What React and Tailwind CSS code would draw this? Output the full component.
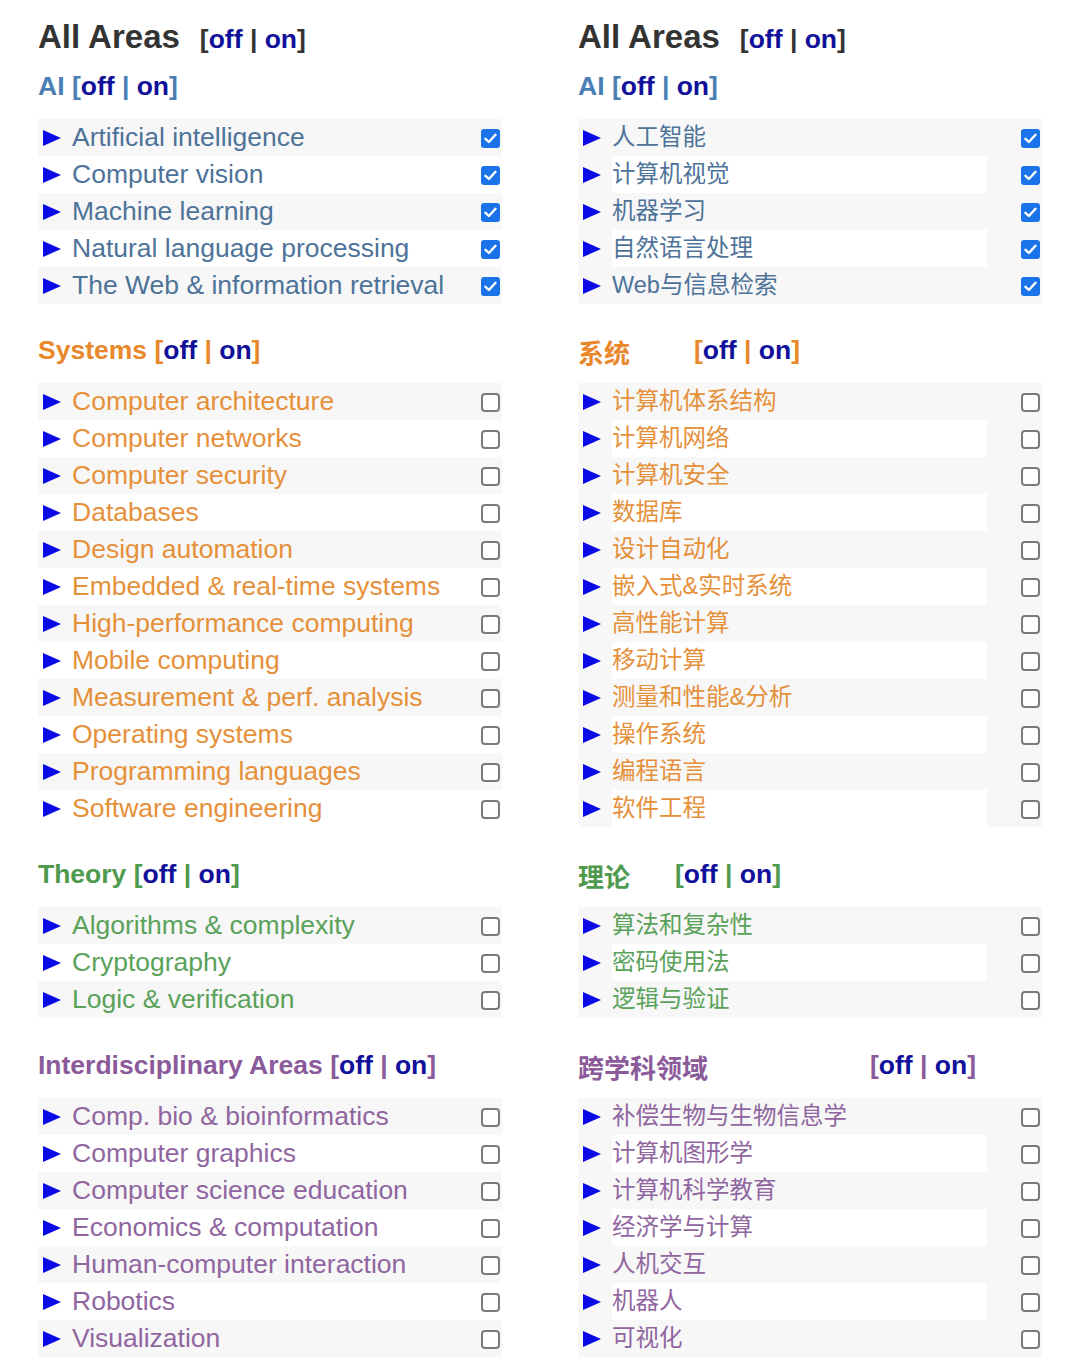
import React from "react";

const SANS = { fontFamily: '"Liberation Sans", Arial, "Noto Sans CJK SC", sans-serif' };

const SECTIONS = [
  {
    key: "ai",
    title: "AI",
    zh: "AI",
    head: "text-[#4a7fb5]",
    row: "text-[#4e7399]",
    checked: true,
    zhGap: "ml-[7px]",
    items: [
      ["Artificial intelligence", "人工智能"],
      ["Computer vision", "计算机视觉"],
      ["Machine learning", "机器学习"],
      ["Natural language processing", "自然语言处理"],
      ["The Web & information retrieval", "Web与信息检索"],
    ],
    mt: "mt-[17px]",
  },
  {
    key: "systems",
    title: "Systems",
    zh: "系统",
    head: "text-[#e8882a]",
    row: "text-[#e5903a]",
    checked: false,
    zhGap: "ml-[64px]",
    items: [
      ["Computer architecture", "计算机体系结构"],
      ["Computer networks", "计算机网络"],
      ["Computer security", "计算机安全"],
      ["Databases", "数据库"],
      ["Design automation", "设计自动化"],
      ["Embedded & real-time systems", "嵌入式&实时系统"],
      ["High-performance computing", "高性能计算"],
      ["Mobile computing", "移动计算"],
      ["Measurement & perf. analysis", "测量和性能&分析"],
      ["Operating systems", "操作系统"],
      ["Programming languages", "编程语言"],
      ["Software engineering", "软件工程"],
    ],
    mt: "mt-[29px]",
  },
  {
    key: "theory",
    title: "Theory",
    zh: "理论",
    head: "text-[#4e9a4e]",
    row: "text-[#5aa25a]",
    checked: false,
    zhGap: "ml-[45px]",
    items: [
      ["Algorithms & complexity", "算法和复杂性"],
      ["Cryptography", "密码使用法"],
      ["Logic & verification", "逻辑与验证"],
    ],
    mt: "mt-[30px]",
  },
  {
    key: "inter",
    title: "Interdisciplinary Areas",
    zh: "跨学科领域",
    head: "text-[#8a5a9a]",
    row: "text-[#9066a0]",
    checked: false,
    zhGap: "ml-[162px]",
    items: [
      ["Comp. bio & bioinformatics", "补偿生物与生物信息学"],
      ["Computer graphics", "计算机图形学"],
      ["Computer science education", "计算机科学教育"],
      ["Economics & computation", "经济学与计算"],
      ["Human-computer interaction", "人机交互"],
      ["Robotics", "机器人"],
      ["Visualization", "可视化"],
    ],
    mt: "mt-[30px]",
  },
];

const Toggle = () => (
  <>
    [<span className="text-[#10109a]">off</span> | <span className="text-[#10109a]">on</span>]
  </>
);

const Arrow = () => (
  <svg width="20" height="18" viewBox="0 0 20 18" className="shrink-0">
    <path d="M1 1 L19 9 L1 17 Z" fill="#0a0ae6" />
  </svg>
);

const Box = ({ checked }) =>
  checked ? (
    <span className="flex h-[19px] w-[19px] items-center justify-center rounded-[3px] bg-[#1a73e8]">
      <svg width="13" height="11" viewBox="0 0 13 11">
        <path d="M1.5 5.8 L4.9 9 L11.5 1.8" fill="none" stroke="#fff" strokeWidth="2.4" strokeLinecap="round" strokeLinejoin="round" />
      </svg>
    </span>
  ) : (
    <span className="block h-[19px] w-[19px] rounded-[4px] border-2 border-[#7a7a7a] bg-white" />
  );

// right column: even rows keep the grey row but the label cell is white
const Row = ({ label, idx, color, checked, zh }) => {
  const odd = idx % 2 === 0;
  const cell = !odd && zh;
  return (
    <div className={`flex h-[37px] items-center ${odd || zh ? "bg-[#f7f7f7]" : "bg-white"}`}>
      <div className="flex w-[34px] justify-end pr-[10px]">
        <Arrow />
      </div>
      <div
        className={`flex h-full flex-1 items-center ${color} ${zh ? "text-[23.5px]" : "text-[26.5px]"} ${
          cell ? "mr-[34px] bg-white" : ""
        }`}
      >
        {label}
      </div>
      {!cell && <div className="w-[34px]" />}
      <div className="flex w-[20px] justify-start pt-[2px]">
        <Box checked={checked} />
      </div>
      <div className="w-[1px]" />
    </div>
  );
};

const Column = ({ zh }) => (
  <div className="w-[464px]" style={SANS}>
    <div className="flex h-[40px] items-baseline whitespace-pre font-bold text-[#333]">
      <span className="text-[33px]">All Areas</span>
      <span className="ml-[20px] text-[26.5px]">
        <Toggle />
      </span>
    </div>
    {SECTIONS.map((s) => (
      <div key={s.key} className={s.mt}>
        <div className={`flex h-[36px] items-center whitespace-pre text-[26.5px] font-bold ${s.head}`}>
          {zh && s.key !== "ai" ? (
            <>
              <span className="relative top-[3px] text-[26px]">{s.zh}</span>
              <span className={s.zhGap}>
                <Toggle />
              </span>
            </>
          ) : (
            <span>
              {s.title} <Toggle />
            </span>
          )}
        </div>
        <div className="mt-[14px]">
          {s.items.map((it, i) => (
            <Row key={it[0]} label={zh ? it[1] : it[0]} idx={i} color={s.row} checked={s.checked} zh={zh} />
          ))}
        </div>
      </div>
    ))}
  </div>
);

export default function App() {
  return (
    <div className="min-h-[1369px] w-[1080px] bg-white pl-[38px] pt-[12px]">
      <div className="flex gap-[76px]">
        <Column />
        <Column zh />
      </div>
    </div>
  );
}
